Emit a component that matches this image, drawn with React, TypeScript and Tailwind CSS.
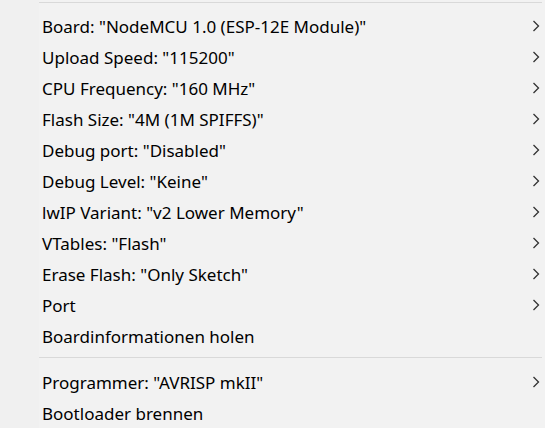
const items: { label: string; sub?: boolean; sep?: boolean }[] = [
  { label: 'Board: "NodeMCU 1.0 (ESP-12E Module)"', sub: true },
  { label: 'Upload Speed: "115200"', sub: true },
  { label: 'CPU Frequency: "160 MHz"', sub: true },
  { label: 'Flash Size: "4M (1M SPIFFS)"', sub: true },
  { label: 'Debug port: "Disabled"', sub: true },
  { label: 'Debug Level: "Keine"', sub: true },
  { label: 'lwIP Variant: "v2 Lower Memory"', sub: true },
  { label: 'VTables: "Flash"', sub: true },
  { label: 'Erase Flash: "Only Sketch"', sub: true },
  { label: "Port", sub: true },
  { label: "Boardinformationen holen" },
  { label: "", sep: true },
  { label: 'Programmer: "AVRISP mkII"', sub: true },
  { label: "Bootloader brennen" },
];

const Chevron = () => (
  <svg width="8" height="12" viewBox="0 0 8 12" className="shrink-0">
    <path d="M1.5 1 L6.5 6 L1.5 11" fill="none" stroke="#333" strokeWidth="1.3" />
  </svg>
);

export default function App() {
  return (
    <div
      className="flex h-[428px] w-[545px] overflow-hidden bg-[#f2f2f2] text-[17px] text-black"
      style={{ fontFamily: '"Noto Sans", "Open Sans", sans-serif' }}
    >
      <div className="w-[39px] shrink-0 bg-[#f0f0f0]" />
      <div className="flex flex-1 flex-col">
        <div className="mt-[2px] mr-[3px] h-px bg-[#d9d9d9]" />
        <ul className="mt-[7px] flex flex-col">
          {items.map((item, i) =>
            item.sep ? (
              <li key={i} className="mt-[6px] mb-[8px] mr-[3px] h-px bg-[#d9d9d9]" />
            ) : (
              <li key={i} className="flex h-[31px] items-center justify-between pl-[3px] pr-[5px]">
                <span className="pt-[2px] leading-none">{item.label}</span>
                {item.sub && <Chevron />}
              </li>
            ),
          )}
        </ul>
      </div>
    </div>
  );
}
